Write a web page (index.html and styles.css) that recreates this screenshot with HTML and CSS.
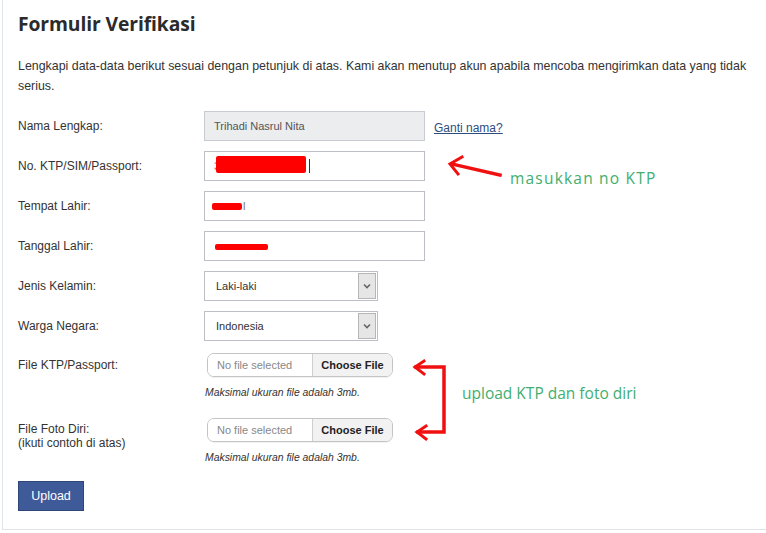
FILE: index.html
```html
<!DOCTYPE html>
<html lang="id">
<head>
<meta charset="utf-8">
<title>Formulir Verifikasi</title>
<link rel="stylesheet" href="styles.css">
</head>
<body>
<div class="panel">
  <h1 class="title">Formulir Verifikasi</h1>
  <p class="intro">Lengkapi data-data berikut sesuai dengan petunjuk di atas. Kami akan menutup akun apabila mencoba mengirimkan data yang tidak serius.</p>

  <div class="form">
    <div class="row">
      <div class="label">Nama Lengkap:</div>
      <div class="field">
        <div class="input disabled">Trihadi Nasrul Nita</div>
        <a class="link" href="#">Ganti nama?</a>
      </div>
    </div>
    <div class="row">
      <div class="label">No. KTP/SIM/Passport:</div>
      <div class="field">
        <div class="input"><span class="ch">3</span><span class="redact r1"></span><span class="caret"></span></div>
      </div>
    </div>
    <div class="row">
      <div class="label">Tempat Lahir:</div>
      <div class="field">
        <div class="input"><span class="redact r2"></span><span class="ch">l</span></div>
      </div>
    </div>
    <div class="row">
      <div class="label">Tanggal Lahir:</div>
      <div class="field">
        <div class="input"><span class="redact r3"></span></div>
      </div>
    </div>
    <div class="row">
      <div class="label">Jenis Kelamin:</div>
      <div class="field">
        <div class="select"><span class="sel-text">Laki-laki</span><span class="sel-btn"><svg width="8" height="6" viewBox="0 0 8 6"><path d="M1 1.5 L4 4.5 L7 1.5" fill="none" stroke="#666" stroke-width="1.6"/></svg></span></div>
      </div>
    </div>
    <div class="row">
      <div class="label">Warga Negara:</div>
      <div class="field">
        <div class="select"><span class="sel-text">Indonesia</span><span class="sel-btn"><svg width="8" height="6" viewBox="0 0 8 6"><path d="M1 1.5 L4 4.5 L7 1.5" fill="none" stroke="#666" stroke-width="1.6"/></svg></span></div>
      </div>
    </div>
    <div class="row file-row">
      <div class="label">File KTP/Passport:</div>
      <div class="field col">
        <div class="file"><span class="file-name">No file selected</span><span class="file-btn">Choose File</span></div>
        <div class="hint">Maksimal ukuran file adalah 3mb.</div>
      </div>
    </div>
    <div class="row file-row second">
      <div class="label">File Foto Diri:<br>(ikuti contoh di atas)</div>
      <div class="field col">
        <div class="file"><span class="file-name">No file selected</span><span class="file-btn">Choose File</span></div>
        <div class="hint">Maksimal ukuran file adalah 3mb.</div>
      </div>
    </div>
    <button class="upload" type="button">Upload</button>
  </div>

  <svg class="annot-arrows" width="766" height="533" viewBox="0 0 766 533">
    <g stroke="#f01010" stroke-width="3.5" fill="none" stroke-linecap="square">
      <path d="M500 175 L452 164"/>
      <path d="M462 157 L450 164 L458 174" stroke-width="3"/>
      <path d="M416 367 L444 367 L444 432 L418 432"/>
      <path d="M424 361 L415 367 L424 374" stroke-width="3"/>
      <path d="M426 426 L417 432 L426 439" stroke-width="3"/>
    </g>
  </svg>
  <div class="note n1">masukkan no KTP</div>
  <div class="note n2">upload KTP dan foto diri</div>
</div>
</body>
</html>
```
FILE: styles.css
```css
* { box-sizing: border-box; }
html, body { margin: 0; padding: 0; background: #fff; }
body {
  font-family: "Liberation Sans", Arial, sans-serif;
  font-size: 12px;
  color: #333;
  width: 766px;
  height: 533px;
  overflow: hidden;
}
.panel {
  position: relative;
  margin-left: 2px;
  height: 530px;
  border-left: 1px solid #dfe3ea;
  border-bottom: 1px solid #dfe3ea;
  padding: 11px 0 0 15px;
}
.title {
  margin: 0;
  font-family: "Open Sans", "DejaVu Sans", sans-serif;
  font-weight: 700;
  font-size: 19.3px;
  line-height: 26px;
  color: #2b2b2b;
  letter-spacing: -0.1px;
}
.intro {
  margin: 19px 0 0;
  line-height: 20px;
  font-size: 12.4px;
  width: 745px;
}
.form {
  margin-top: 15px;
  display: flex;
  flex-direction: column;
  gap: 10px;
}
.row {
  display: flex;
  align-items: center;
}
.label {
  width: 186px;
  flex: none;
  line-height: 14px;
}
.field {
  display: flex;
  align-items: center;
}
.field.col {
  flex-direction: column;
  align-items: flex-start;
}
.input {
  width: 221px;
  height: 30px;
  border: 1px solid #bcc0c6;
  background: #fff;
  display: flex;
  align-items: center;
  padding-left: 9px;
  font-size: 11px;
  color: #555;
}
.input.disabled {
  background: #ebedef;
  border-color: #c8cbcf;
}
.link {
  margin-left: 9px;
  margin-top: 3px;
  color: #2d4d80;
  text-decoration: underline;
  font-size: 12px;
}
.ch { color: #777; font-size: 11px; }
.redact { display: inline-block; background: #ff0000; border-radius: 2px; }
.r1 { width: 90px; height: 17px; margin-left: -4px; margin-top: -3px; }
.r2 { width: 30px; height: 7px; margin-left: -2px; margin-right: 1px; }
.r3 { width: 53px; height: 6px; margin-left: 1px; margin-top: 1px; }
.caret { display: inline-block; width: 1px; height: 14px; background: #333; margin-left: 3px; }
.select {
  width: 174px;
  height: 30px;
  border: 1px solid #bcc0c6;
  background: #fff;
  display: flex;
  align-items: stretch;
  font-size: 11px;
  color: #333;
}
.sel-text {
  flex: 1;
  display: flex;
  align-items: center;
  padding-left: 11px;
}
.sel-btn {
  width: 18px;
  background: #e6e6e6;
  border: 1px solid #b6b6b6;
  margin: 1px;
  display: flex;
  align-items: center;
  justify-content: center;
}
.file-row { align-items: flex-start; margin-top: 2px; }
.file-row .label { margin-top: 5px; }
.file-row.second { margin-top: 9px; }
.file-row.second .label { margin-top: 4px; }
.file {
  margin-left: 3px;
  width: 186px;
  height: 24px;
  border: 1px solid #c4c4c4;
  border-radius: 7px;
  display: flex;
  overflow: hidden;
  font-size: 11px;
  box-shadow: 0 1px 1px rgba(0,0,0,0.06);
}
.file-name {
  width: 105px;
  display: flex;
  align-items: center;
  padding-left: 9px;
  color: #888;
  background: #fff;
  border-right: 1px solid #cfcfcf;
}
.file-btn {
  flex: 1;
  display: flex;
  align-items: center;
  justify-content: center;
  background: #f2f2f2;
  font-weight: 700;
  color: #222;
  font-size: 11px;
}
.hint {
  margin: 10px 0 0 1px;
  font-size: 10.4px;
  font-style: italic;
  color: #333;
  line-height: 12px;
}
.upload {
  margin-top: 7px;
  align-self: flex-start;
  width: 66px;
  height: 30px;
  border: 1px solid #2f4679;
  background: #3f5a98;
  color: #fff;
  font-family: "Liberation Sans", Arial, sans-serif;
  font-size: 12.5px;
  padding: 0;
}
.annot-arrows {
  position: absolute;
  left: -3px;
  top: 0;
  pointer-events: none;
}
.note {
  position: absolute;
  font-family: "Open Sans", "DejaVu Sans", sans-serif;
  color: #3fae6e;
  font-size: 15.5px;
  line-height: 20px;
  white-space: nowrap;
}
.n1 { left: 507px; top: 168px; letter-spacing: 1.2px; }
.n2 { left: 459px; top: 383px; }
```
